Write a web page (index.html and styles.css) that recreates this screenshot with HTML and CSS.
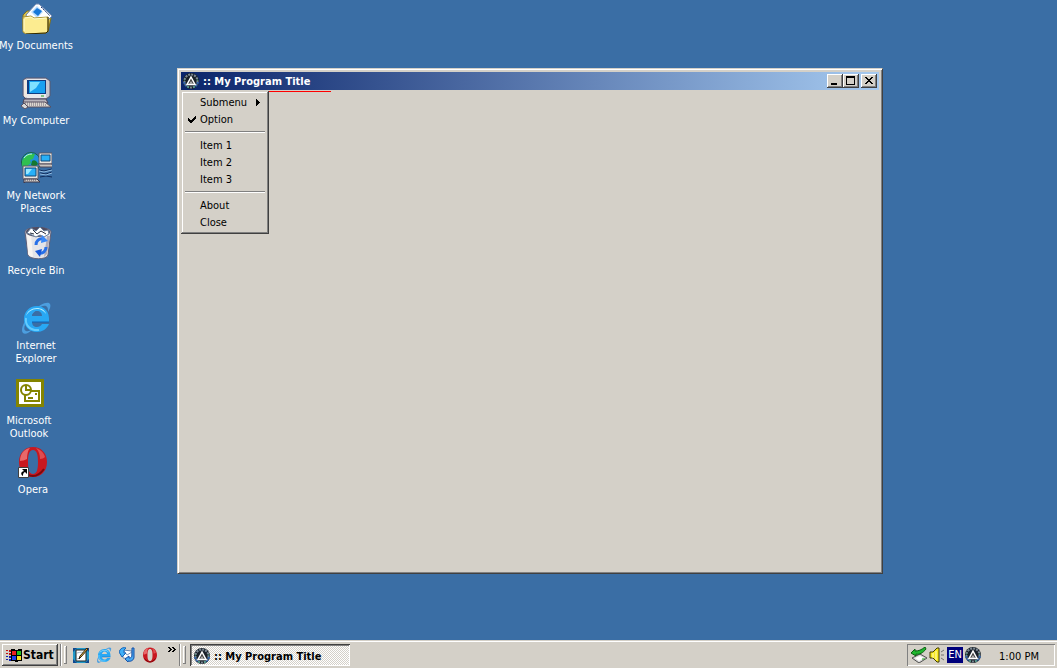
FILE: index.html
```html
<!DOCTYPE html>
<html lang="en">
<head>
    <meta charset="UTF-8">
    <meta name="viewport" content="width=device-width, initial-scale=1.0">
    <title>:: My Program Title</title>
    <link rel="stylesheet" href="styles.css">
</head>
<body>
    <!-- Shared icons -->
    <svg class="sprite" aria-hidden="true">
        <symbol id="icon-ie" viewBox="0 0 32 32">
            <path d="M3 31C0 28 4 18 12 10S28-1 30 2c1 2 0 5-2 8 0-3 0-5-2-6C22 2 14 9 9 16S3 28 6 29c2 1 5-1 7-2-4 4-8 6-10 4Z" fill="#4c9fe0"/>
            <path d="M29 20H12c0 3 2 5 5 5 2 0 4-1 5-3h7c-2 5-7 8-12 8C9 30 4 24 4 17S9 4 17 4c7 0 13 5 12 16ZM12 14h10c0-3-2-5-5-5s-5 2-5 5Z" fill="#28a8f4"/>
            <path d="M6 14c1-5 6-8 11-8 4 0 8 2 9 6-2-3-5-5-9-5-5 0-9 3-11 7Z" fill="#b0ecff"/>
            <path d="M6 16c-1 7 4 13 13 12" fill="none" stroke="#64ccff" stroke-width="2"/>
            <path d="M12 20h17" stroke="#0b62b8"/>
        </symbol>
        <symbol id="icon-opera" viewBox="0 0 32 32">
            <path fill-rule="evenodd" d="M16 1c8 0 14 6 14 15s-6 15-14 15S2 25 2 16 8 1 16 1Zm0 3c-4 0-5 5-5 12s1 12 5 12 5-5 5-12-1-12-5-12Z" fill="#c81820"/>
            <path d="M13 2C7 3 3 8 3 15c2 0 5-1 7-2 0-5 1-9 3-11Z" fill="#e8686a"/>
            <path d="M19 2c3 1 8 4 9 9-1 1-3 2-5 2 0-4-1-8-4-11Z" fill="#df4c50"/>
            <path d="M5 23c3 4 7 7 11 7s8-3 11-7" fill="none" stroke="#7c080c" stroke-width="2"/>
        </symbol>
        <symbol id="icon-app" viewBox="0 0 16 16">
            <circle cx="8" cy="8" r="8" fill="#182028"/>
            <circle cx="8" cy="8" r="6.5" fill="none" stroke="#7c8894" stroke-width="2" stroke-dasharray="2 1"/>
            <path d="M1 9a7 7 0 0 0 4 5M15 9a7 7 0 0 1-4 5" fill="none" stroke="#3468b0" stroke-width="2" stroke-dasharray="2 1"/>
            <path d="M4 11.500 8 4l4 7.500Z" fill="#444" stroke="#fff" stroke-width="1.500"/>
            <path d="M6 11h4L8 8Z" fill="#b0b0b0"/>
            <path d="M4 14h2M10 14h2M1 7h1M14 7h1" stroke="#40a878"/>
        </symbol>
    </svg>

    <main class="desktop">
        <a href="#documents" class="shortcut documents">
            <svg class="shortcut-icon" viewBox="0 0 32 32">
                <path d="M3 13 7 9h4l3 3h13l4 4-3 14H5L3 27Z" fill="#d8c050" stroke="#80701c"/>
                <path d="M6 13 16 2h3l13 12-9 9-14-4Z" fill="#fff" stroke="#7088b0"/>
                <path d="m17 4 6 6-6 6-6-6Z" fill="#b8dcff"/>
                <path d="m17 6 5 3-4 5-5-4Z" fill="#1878d8"/>
                <path d="m21 5 9 9" stroke="#204080" stroke-dasharray="2 1"/>
                <path d="m3 15 8-1 3 2 14-1v14l-2 2-20 1-3-2Z" fill="#fcec90" stroke="#a89030"/>
                <path d="M4 17v12M5 16l6-1 3 2 12-1" fill="none" stroke="#fffcd0"/>
                <path d="M28 15v14l-2 2-20 1" fill="none" stroke="#302800"/>
            </svg>
            <span>My Documents</span>
        </a>
        <a href="#computer" class="shortcut computer">
            <svg class="shortcut-icon" viewBox="0 0 32 32">
                <path d="M3 3 6 1h20l4 3v15l-4 3H6l-3-3Z" fill="#c8c8d0" stroke="#585870"/>
                <path d="M4 3h3v17H5l-1-1Z" fill="#f0e8e0"/>
                <path d="M7 2h19v19H7Z" fill="#e8e8ec"/>
                <path d="M7 3h19v14H7Z" fill="#103c80"/>
                <path d="M9 4h16v12H9Z" fill="#18a0f0"/>
                <path d="M10 5h10l-4 6-6 4Z" fill="#80e0ff"/>
                <path d="M21 19h3" stroke="#20a020"/>
                <path d="M4 22h22l2 4H3Z" fill="#b8b4bc" stroke="#484058"/>
                <path d="M3 25h22l6 5H7Z" fill="#ddd8d0" stroke="#585060"/>
                <path d="M5 26h19M7 28h20" stroke="#686074" stroke-dasharray="1 1"/>
                <path d="m1 29 3-3 4 4-3 2Z" fill="#d8d8d8" stroke="#585060"/>
            </svg>
            <span>My Computer</span>
        </a>
        <a href="#network" class="shortcut network">
            <svg class="shortcut-icon" viewBox="0 0 32 32">
                <circle cx="11" cy="10" r="9.500" fill="#2090e0" stroke="#186040"/>
                <path d="M2 10c1-5 6-9 13-8l-2 5-3 1 1 3-5 4-2 4c-2-3-2-6-2-9Z" fill="#30c050"/>
                <path d="M12 9c2-2 5 0 6 3l-3 3-4-2Z" fill="#147830"/>
                <path d="M4 6c2-3 5-4 8-4" fill="none" stroke="#c0ffc0"/>
                <path d="M19 1h13v11H19Z" fill="#e8e4e0" stroke="#585868"/>
                <path d="M21 3h9v6h-9Z" fill="#28b0f8" stroke="#104878"/>
                <path d="M18 12h14l1 3H20Z" fill="#c8c4c0" stroke="#504858"/>
                <path d="m19 18 5 1 8-2M20 21l6 1 6-2M20 25l6-1 6 1" fill="none" stroke="#102c5c"/>
                <path d="m19 19 5 1 8-2M20 22l6 1 6-2" fill="none" stroke="#8cb8e0"/>
                <path d="M3 14h15v13H3Z" fill="#e8e4e0" stroke="#585868"/>
                <path d="M5 16h11v8H5Z" fill="#28b0f8" stroke="#104878"/>
                <path d="M6 17h6l-4 5H6Z" fill="#98e8ff"/>
                <path d="M4 27h13l3 3H5l-1 1Z" fill="#d0ccc8" stroke="#403848"/>
                <path d="M5 28h12" stroke="#504858" stroke-dasharray="1 1"/>
            </svg>
            <span>My Network<br>Places</span>
        </a>
        <a href="#recycle" class="shortcut recycle">
            <svg class="shortcut-icon" viewBox="0 0 32 32">
                <path d="M5 5c0-6 26-6 26 0l-3 23c-1 5-18 5-20 0Z" fill="#e4e4e8" stroke="#606078"/>
                <path d="M7 8h4l2 22c-3-1-4-1-5-3Z" fill="#f8f4f0"/>
                <path d="M27 9h3l-3 18-3 3Z" fill="#b0acb8"/>
                <ellipse cx="18" cy="5" rx="12" ry="5" fill="#504c60"/>
                <path d="m7 6 4-5 5 3 4-4 4 4 4-1 1 4-5 3-4-2-4 2-4-2Z" fill="#fff" stroke="#68809c"/>
                <path d="m13 3 4 4 4-3 5 3M10 6l4 1" fill="none" stroke="#283040"/>
                <path d="M16 18c0-4 3-7 7-6M26 20c0 4-3 7-7 6" fill="none" stroke="#2870e8" stroke-width="3"/>
                <path d="m22 8 6 6-7 2Z" fill="#3888f8"/>
                <path d="m20 30-5-6 7-2Z" fill="#1858d8"/>
            </svg>
            <span>Recycle Bin</span>
        </a>
        <a href="#internet" class="shortcut internet">
            <svg class="shortcut-icon"><use href="#icon-ie"/></svg>
            <span>Internet<br>Explorer</span>
        </a>
        <a href="#outlook" class="shortcut outlook">
            <svg class="shortcut-icon" viewBox="0 0 32 32" shape-rendering="crispEdges">
                <path d="M3 2h28v28H3Z" fill="#848400"/>
                <path d="M6 5h22v22H6Z" fill="#fff"/>
                <g shape-rendering="auto" fill="#fff" stroke="#848400" stroke-width="2">
                    <path d="M12 14h14v10H12Z"/>
                    <path d="M22 17h2M15 21h5"/>
                    <circle cx="13" cy="13" r="5"/>
                    <path d="M13 9v4h4" fill="none"/>
                </g>
            </svg>
            <span>Microsoft<br>Outlook</span>
        </a>
        <a href="#opera" class="shortcut opera">
            <svg class="shortcut-icon" viewBox="0 0 32 32">
                <use href="#icon-opera" width="32" height="32"/>
                <path d="M1.500 21.500h10v10h-10Z" fill="#fff" stroke="#404040"/>
                <path d="M5 23h5v5L8 26c-2 1-2 2-2 4-2-1-3-4 1-5Z" fill="#000"/>
            </svg>
            <span>Opera</span>
        </a>

        <!-- Program window -->
        <section class="window" aria-label="My Program Title">
            <header class="title-bar">
                <svg class="icon"><use href="#icon-app"/></svg>
                <h1 class="title">:: My Program Title</h1>
                <button type="button" class="window-btn" aria-label="Minimize">
                    <svg viewBox="0 0 12 10"><path d="M2 7h6v2H2Z"/></svg>
                </button>
                <button type="button" class="window-btn" aria-label="Maximize">
                    <svg viewBox="0 0 12 10"><path fill-rule="evenodd" d="M1 0h9v9H1Zm1 2v6h7V2Z"/></svg>
                </button>
                <button type="button" class="window-btn close-btn" aria-label="Close">
                    <svg viewBox="0 0 12 10"><path d="M2 1h2v1h1v1h2V2h1V1h2v1H9v1H8v1H7v1h1v1h1v1h1v1H8V7H7V6H5v1H4v1H2V7h1V6h1V5h1V4H4V3H3V2H2Z"/></svg>
                </button>
            </header>
            <div class="client">
                <div class="red-line"></div>
                <ul class="menu" role="menu">
                    <li><button type="button" role="menuitem">Submenu
                        <svg class="arrow" viewBox="0 0 4 7"><path d="M0 0h1v1h1v1h1v1h1v1H3v1H2v1H1v1H0Z"/></svg></button></li>
                    <li><button type="button" role="menuitemcheckbox" aria-checked="true">
                        <svg class="check" viewBox="0 0 8 7"><path d="M0 2h1v1h1v1h2V3h1V2h1V1h1V0h1v3H7v1H6v1H5v1H4v1H2V6H1V5H0Z"/></svg>Option</button></li>
                    <li class="divider" role="separator"></li>
                    <li><button type="button" role="menuitem">Item 1</button></li>
                    <li><button type="button" role="menuitem">Item 2</button></li>
                    <li><button type="button" role="menuitem">Item 3</button></li>
                    <li class="divider" role="separator"></li>
                    <li><button type="button" role="menuitem">About</button></li>
                    <li><button type="button" role="menuitem">Close</button></li>
                </ul>
            </div>
        </section>
    </main>

    <footer class="taskbar">
        <button type="button" class="start-btn">
            <svg class="icon" viewBox="0 0 16 16" shape-rendering="crispEdges">
                <path d="M5 2h4v1h3V2h4v12h-4v1H9v-1H5Z" fill="#000"/>
                <path d="M6 4h4v4H6Z" fill="#f02020"/>
                <path d="M11 4h4v4h-4Z" fill="#20c020"/>
                <path d="M6 9h4v4H6Z" fill="#2040f0"/>
                <path d="M11 9h4v4h-4Z" fill="#f8e020"/>
                <path d="M0 3h2v1H0Zm3 0h2v2H3ZM0 6h2v1H0Zm3 0h2v2H3Z" fill="#c01010"/>
                <path d="M0 9h2v1H0Zm3 0h2v2H3Zm-3 3h2v1H0Zm3 0h2v2H3Z" fill="#1020b0"/>
            </svg>Start
        </button>
        <span class="etched"></span>
        <span class="grip"></span>
        <nav class="quick-launch" aria-label="Quick Launch">
            <button type="button" aria-label="Show Desktop">
                <svg class="icon" viewBox="0 0 16 16">
                    <path d="M0 1h16v15H0Z" fill="#2098c8"/>
                    <path d="M0 1h4L0 5Zm12 0h4v4Zm4 11v4h-4ZM0 12l4 4H0Z" fill="#104890"/>
                    <path d="M3 3h10v11H3Z" fill="#fff" stroke="#202020"/>
                    <path d="M4 6c3-1 6-1 8 0M4 12l3-1" fill="none" stroke="#a0b8c8"/>
                    <path d="m6 12 1-3 7-8 1 1-7 8Z" fill="#f0c040" stroke="#302010"/>
                </svg>
            </button>
            <button type="button" aria-label="Internet Explorer">
                <svg class="icon"><use href="#icon-ie"/></svg>
            </button>
            <button type="button" aria-label="Outlook Express">
                <svg class="icon" viewBox="0 0 16 16">
                    <path d="m4 3 9 1v8l-9-1Z" fill="#fff" stroke="#6888b0"/>
                    <path d="m5 4 3 4 5-3" fill="none" stroke="#8098b8"/>
                    <path d="M1 3c1-2 4-3 6-2L5 3v3h2l-4 4-3-5Z" fill="#40b0f8" stroke="#1864b8"/>
                    <path d="M13 1h2v9c0 3-3 5-6 4v1l-3-3 4-3v2c2 0 3-1 3-3Z" fill="#48a8f0" stroke="#1450a8"/>
                </svg>
            </button>
            <button type="button" aria-label="Opera">
                <svg class="icon"><use href="#icon-opera"/></svg>
            </button>
            <button type="button" class="more" aria-label="More">
                <svg viewBox="0 0 8 5" shape-rendering="crispEdges"><path d="M0 0h2v1h1v1h1v1H3v1H2v1H0V4h1V3h1V2H1V1H0ZM4 0h2v1h1v1h1v1H7v1H6v1H4V4h1V3h1V2H5V1H4Z"/></svg>
            </button>
        </nav>
        <span class="etched"></span>
        <span class="grip"></span>
        <button type="button" class="task-btn">
            <svg class="icon"><use href="#icon-app"/></svg>:: My Program Title
        </button>
        <div class="tray">
            <svg class="icon" viewBox="0 0 16 16">
                <path d="m1 11 8-4 7 4-8 5Z" fill="#d8d8d8" stroke="#505050"/>
                <path d="m4 11 5-2 4 2-5 3Z" fill="#fff"/>
                <path d="M11 12h3" stroke="#20a020"/>
                <path d="m0 6 4-4v2c4 0 6-1 10-4l1 2c-3 4-7 6-10 5v2Z" fill="#20b830" stroke="#085c10"/>
            </svg>
            <svg class="icon" viewBox="0 0 16 16">
                <path d="M1 5h3l4-4h2v14H8l-4-4H1Z" fill="#f8e820" stroke="#403c00"/>
                <path d="M4 6v5M7 4v9" stroke="#fffcc0"/>
                <path d="m12 5 3-2M12 8h3m-3 3 3 2" stroke="#707070"/>
            </svg>
            <span class="lang">EN</span>
            <svg class="icon"><use href="#icon-app"/></svg>
            <time class="clock">1:00 PM</time>
        </div>
    </footer>
</body>
</html>
```
FILE: styles.css
```css
/* Basic styling */
* {
    box-sizing: border-box;
}

body {
    display: flex;
    flex-direction: column;
    height: 100vh;
    margin: 0;
    overflow: hidden;
    background-color: #3a6ea5;
    color: #000;
    font-family: Tahoma, "DejaVu Sans Condensed", "DejaVu Sans", sans-serif;
    font-size: 11px;
    line-height: 13px;
    cursor: default;
}

button {
    margin: 0;
    padding: 0;
    border: none;
    background: none;
    color: inherit;
    font: inherit;
}

svg {
    display: block;
    flex: none;
}

.sprite {
    position: absolute;
    width: 0;
    height: 0;
}

.icon {
    width: 16px;
    height: 16px;
}

/* Desktop */
.desktop {
    position: relative;
    flex: 1;
}

.shortcut {
    position: absolute;
    left: -2px;
    display: flex;
    flex-direction: column;
    align-items: center;
    gap: 5px;
    width: 76px;
    color: #fff;
    text-align: center;
    text-decoration: none;
    white-space: nowrap;
}

.shortcut-icon {
    width: 32px;
    height: 32px;
}

.documents {
    top: 2px;
}

.computer {
    top: 77px;
}

.network {
    top: 152px;
}

.recycle {
    top: 227px;
}

.internet {
    top: 302px;
}

.outlook {
    top: 377px;
    left: -9px;
}

.opera {
    top: 446px;
    left: -5px;
}

/* Program window */
.window {
    position: absolute;
    top: 68px;
    left: 177px;
    display: flex;
    flex-direction: column;
    width: 706px;
    height: 506px;
    padding: 3px;
    background-color: #d4d0c8;
    border: 1px solid;
    border-color: #d4d0c8 #404040 #404040 #d4d0c8;
    box-shadow: inset 1px 1px #fff, inset -1px -1px #808080;
}

.title-bar {
    display: flex;
    align-items: center;
    height: 18px;
    padding: 0 2px;
    background: linear-gradient(to right, #0a246a, #a6caf0);
}

.title {
    flex: 1;
    margin: 0 0 0 4px;
    color: #fff;
    font-size: 11px;
    font-weight: bold;
}

.window-btn {
    width: 16px;
    height: 14px;
    padding: 2px;
    background-color: #d4d0c8;
    box-shadow: inset -1px -1px #404040, inset 1px 1px #fff, inset -2px -2px #808080;
}

.window-btn svg {
    width: 12px;
    height: 10px;
    shape-rendering: crispEdges;
}

.close-btn {
    margin-left: 2px;
}

.client {
    position: relative;
    flex: 1;
}

.red-line {
    width: 150px;
    height: 2px;
    border-bottom: 1px solid #f00;
}

/* System menu */
.menu {
    position: absolute;
    top: 1px;
    left: 0;
    width: 88px;
    margin: 0;
    padding: 3px;
    list-style: none;
    background-color: #d4d0c8;
    box-shadow: inset -1px -1px #404040, inset 1px 1px #d4d0c8, inset -2px -2px #808080, inset 2px 2px #fff;
}

.menu button {
    position: relative;
    display: flex;
    align-items: center;
    width: 100%;
    height: 17px;
    padding-left: 16px;
}

.menu .divider {
    height: 2px;
    margin: 3px 1px 4px;
    border-top: 1px solid #808080;
    border-bottom: 1px solid #fff;
}

.arrow {
    width: 4px;
    height: 7px;
    margin: 0 6px 0 auto;
    shape-rendering: crispEdges;
}

.check {
    position: absolute;
    left: 4px;
    width: 8px;
    height: 7px;
    shape-rendering: crispEdges;
}

/* Taskbar */
.taskbar {
    display: flex;
    align-items: center;
    height: 28px;
    padding: 2px 2px 0;
    background-color: #d4d0c8;
    box-shadow: inset 0 1px #d4d0c8, inset 0 2px #fff;
}

.start-btn {
    display: flex;
    align-items: center;
    gap: 1px;
    width: 56px;
    height: 22px;
    padding: 0 4px;
    font-size: 12px;
    font-weight: bold;
    box-shadow: inset -1px -1px #404040, inset 1px 1px #fff, inset -2px -2px #808080;
}

.etched {
    width: 2px;
    height: 22px;
    margin: 0 2px;
    border-left: 1px solid #808080;
    border-right: 1px solid #fff;
}

.grip {
    width: 3px;
    height: 18px;
    box-shadow: inset -1px -1px #808080, inset 1px 1px #fff;
}

.quick-launch {
    display: flex;
    gap: 7px;
    padding: 0 1px 0 6px;
}

.more {
    align-self: flex-start;
    margin-left: 3px;
}

.more svg {
    width: 8px;
    height: 5px;
}

.task-btn {
    display: flex;
    align-items: center;
    gap: 4px;
    width: 160px;
    height: 22px;
    margin-left: 4px;
    padding: 2px 0 0 4px;
    font-weight: bold;
    background: repeating-conic-gradient(#fff 0 25%, #d4d0c8 0 50%) 0 0 / 2px 2px;
    box-shadow: inset 1px 1px #404040, inset -1px -1px #fff, inset 2px 2px #808080;
}

.tray {
    display: flex;
    align-items: center;
    gap: 2px;
    width: 148px;
    height: 22px;
    margin-left: auto;
    padding: 0 0 0 4px;
    box-shadow: inset 1px 1px #808080, inset -1px -1px #fff;
}

.lang {
    width: 16px;
    height: 16px;
    background-color: #00007b;
    color: #fff;
    line-height: 16px;
    text-align: center;
}

.clock {
    flex: 1;
    padding-top: 2px;
    text-align: center;
}
```
